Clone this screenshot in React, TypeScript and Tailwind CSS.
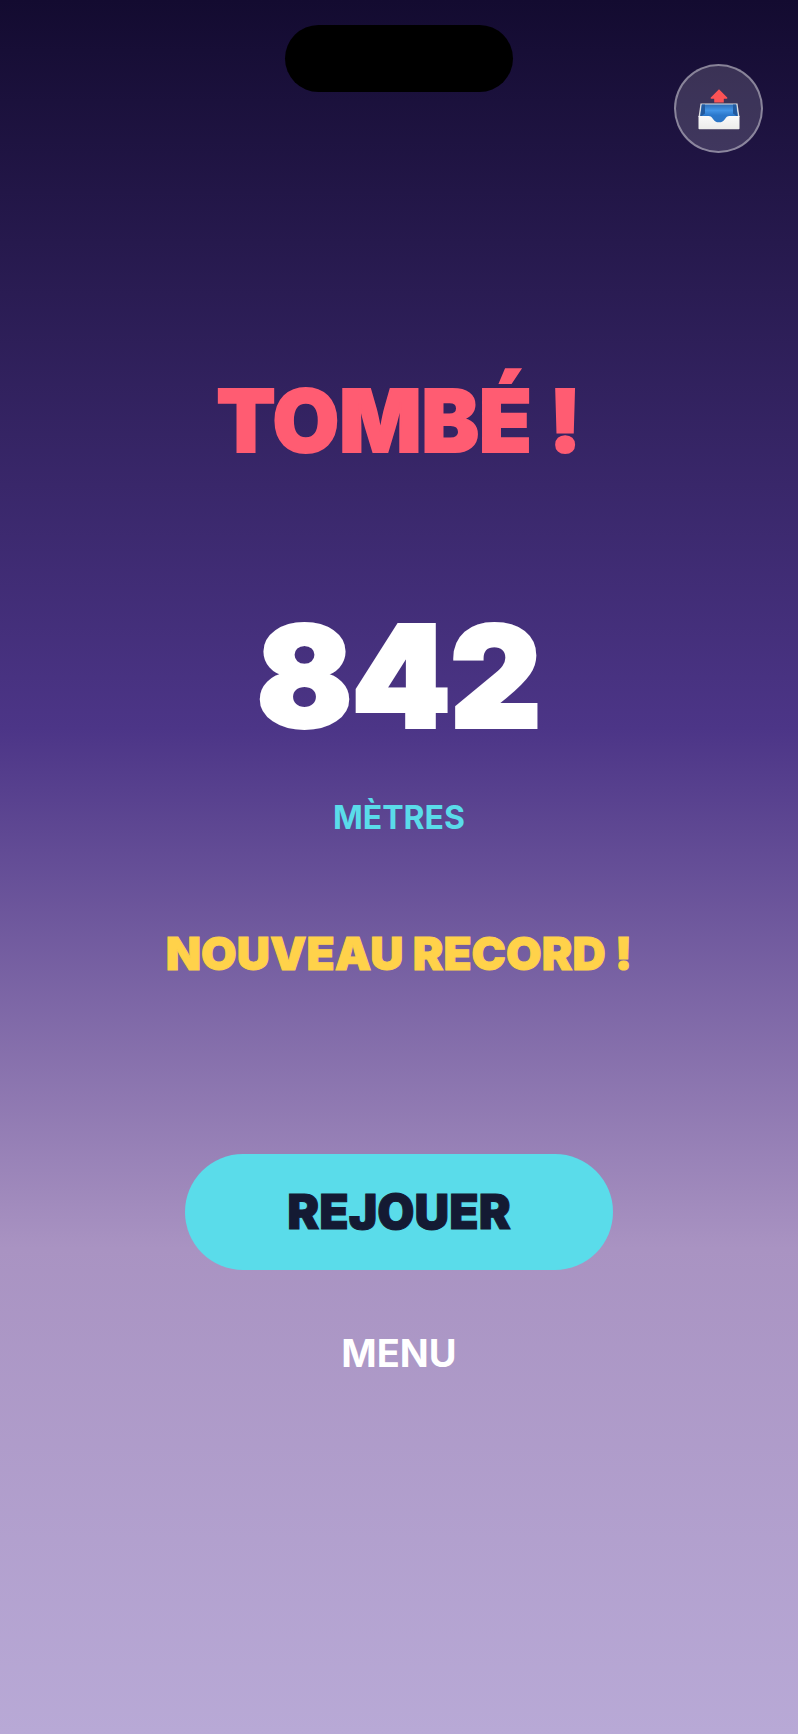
interface GameOverProps {
  distance?: number;
  isRecord?: boolean;
  onReplay?: () => void;
  onMenu?: () => void;
  onShare?: () => void;
}

function OutboxIcon() {
  return (
    <svg className="h-11 w-11" viewBox="0 0 44 44" aria-hidden="true">
      <defs>
        <linearGradient id="tray-back" x1="0" y1="0" x2="0" y2="1">
          <stop offset="0" stopColor="#2f6fb9" />
          <stop offset="0.3" stopColor="#4294e6" />
          <stop offset="0.55" stopColor="#2b78cc" />
          <stop offset="1" stopColor="#2a74c4" />
        </linearGradient>
        <linearGradient id="tray-front" x1="0" y1="0" x2="0" y2="1">
          <stop offset="0" stopColor="#fafafa" />
          <stop offset="1" stopColor="#ececea" />
        </linearGradient>
      </defs>
      {/* Tray */}
      <path d="M3.500 16.500h37L42.500 30h-41z" fill="#dcdde0" />
      <path d="M4.800 17.500h34.400L41 30.500 29 37H15L3 30.500z" fill="url(#tray-back)" />
      <path d="M4.800 17.500H8v9L3.200 30z" fill="#225a9f" />
      <path d="M39.200 17.500H36v9l4.800 3.500z" fill="#225a9f" />
      <path
        d="M1.500 29h10c2.300 0 3.200 1.200 4.500 2.900 1.600 2.200 3.100 3.400 6 3.400s4.400-1.200 6-3.400c1.300-1.700 2.200-2.900 4.500-2.900h10v12.500a.8.8 0 0 1-.8.800H2.300a.8.8 0 0 1-.8-.8z"
        fill="url(#tray-front)"
      />
      {/* Arrow */}
      <path
        d="M22 2.200l8.200 8.300c.5.500.2 1.200-.5 1.200H26.800V15.500h-9.600V11.700h-2.900c-.7 0-1-.7-.5-1.200z"
        fill="#fb5355"
      />
    </svg>
  );
}

export default function App({
  distance = 842,
  isRecord = true,
  onReplay,
  onMenu,
  onShare,
}: GameOverProps) {
  return (
    <main className="relative flex min-h-screen flex-col items-center justify-center bg-[linear-gradient(to_bottom,#130b30_0%,#4c3587_42%,#a993c2_72%,#b8a9d6_100%)] pt-4 font-['Inter',sans-serif] text-white">
      {/* Camera cutout */}
      <div className="absolute inset-x-0 top-[25px] mx-auto h-[67px] w-[228px] rounded-full bg-black" />

      {/* Share button */}
      <button
        type="button"
        onClick={onShare}
        aria-label="Partager"
        className="absolute top-16 right-[35px] flex size-[89px] cursor-pointer items-center justify-center rounded-full border-2 border-white/40 bg-white/15"
      >
        <OutboxIcon />
      </button>

      <h1 className="text-[86px] leading-none font-black text-[#ff5c72] [-webkit-text-stroke:2px_#ff5c72]">
        TOMBÉ !
      </h1>

      {/* Score */}
      <p className="mt-[142px] text-[140px] leading-none font-black [-webkit-text-stroke:4px_white]">
        {distance}
      </p>
      <p className="mt-14 text-[32px] leading-none font-bold text-[#5adcea]">MÈTRES</p>

      {isRecord && (
        <p className="mt-24 text-[46px] leading-none font-black text-[#ffd24a] [-webkit-text-stroke:1px_#ffd24a]">
          NOUVEAU RECORD !
        </p>
      )}

      {/* Actions */}
      <button
        type="button"
        onClick={onReplay}
        className="mt-[178px] h-[116px] w-[428px] cursor-pointer rounded-full bg-[#5adcea] text-[48px] leading-none font-black text-[#141a33] [-webkit-text-stroke:1px_#141a33]"
      >
        REJOUER
      </button>
      <button
        type="button"
        onClick={onMenu}
        className="mt-16 cursor-pointer text-[38px] leading-none font-bold text-white"
      >
        MENU
      </button>
    </main>
  );
}
